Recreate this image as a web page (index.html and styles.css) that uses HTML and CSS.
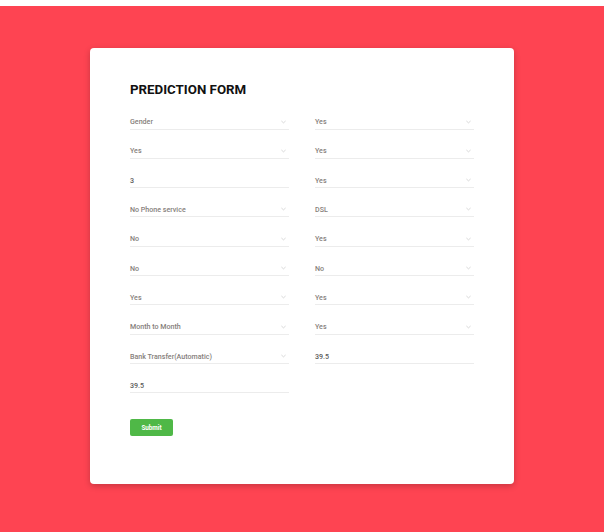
FILE: index.html
```html
<!DOCTYPE html>
<html lang="en">
<head>
<meta charset="utf-8">
<title>Prediction Form</title>
<link rel="stylesheet" href="styles.css">
</head>
<body>
<div class="page">
  <div class="card">
    <h1 class="title">PREDICTION FORM</h1>
    <form class="grid">
      <div class="field select"><span>Gender</span><svg class="chev" viewBox="0 0 6 4"><polyline points="0.5,0.8 3,3 5.5,0.8"/></svg></div>
      <div class="field select"><span>Yes</span><svg class="chev" viewBox="0 0 6 4"><polyline points="0.5,0.8 3,3 5.5,0.8"/></svg></div>
      <div class="field select"><span>Yes</span><svg class="chev" viewBox="0 0 6 4"><polyline points="0.5,0.8 3,3 5.5,0.8"/></svg></div>
      <div class="field select"><span>Yes</span><svg class="chev" viewBox="0 0 6 4"><polyline points="0.5,0.8 3,3 5.5,0.8"/></svg></div>
      <div class="field input"><span>3</span></div>
      <div class="field select"><span>Yes</span><svg class="chev" viewBox="0 0 6 4"><polyline points="0.5,0.8 3,3 5.5,0.8"/></svg></div>
      <div class="field select"><span>No Phone service</span><svg class="chev" viewBox="0 0 6 4"><polyline points="0.5,0.8 3,3 5.5,0.8"/></svg></div>
      <div class="field select"><span>DSL</span><svg class="chev" viewBox="0 0 6 4"><polyline points="0.5,0.8 3,3 5.5,0.8"/></svg></div>
      <div class="field select"><span>No</span><svg class="chev" viewBox="0 0 6 4"><polyline points="0.5,0.8 3,3 5.5,0.8"/></svg></div>
      <div class="field select"><span>Yes</span><svg class="chev" viewBox="0 0 6 4"><polyline points="0.5,0.8 3,3 5.5,0.8"/></svg></div>
      <div class="field select"><span>No</span><svg class="chev" viewBox="0 0 6 4"><polyline points="0.5,0.8 3,3 5.5,0.8"/></svg></div>
      <div class="field select"><span>No</span><svg class="chev" viewBox="0 0 6 4"><polyline points="0.5,0.8 3,3 5.5,0.8"/></svg></div>
      <div class="field select"><span>Yes</span><svg class="chev" viewBox="0 0 6 4"><polyline points="0.5,0.8 3,3 5.5,0.8"/></svg></div>
      <div class="field select"><span>Yes</span><svg class="chev" viewBox="0 0 6 4"><polyline points="0.5,0.8 3,3 5.5,0.8"/></svg></div>
      <div class="field select"><span>Month to Month</span><svg class="chev" viewBox="0 0 6 4"><polyline points="0.5,0.8 3,3 5.5,0.8"/></svg></div>
      <div class="field select"><span>Yes</span><svg class="chev" viewBox="0 0 6 4"><polyline points="0.5,0.8 3,3 5.5,0.8"/></svg></div>
      <div class="field select"><span>Bank Transfer(Automatic)</span><svg class="chev" viewBox="0 0 6 4"><polyline points="0.5,0.8 3,3 5.5,0.8"/></svg></div>
      <div class="field input"><span>39.5</span></div>
      <div class="field input"><span>39.5</span></div>
    </form>
    <button class="submit" type="button">Submit</button>
  </div>
</div>
</body>
</html>
```
FILE: styles.css
```css
* { box-sizing: border-box; }
html, body { margin: 0; padding: 0; background: #fff; }
body { font-family: Roboto, "Liberation Sans", sans-serif; }

.page {
  margin-top: 6px;
  width: 604px;
  min-height: 526px;
  background: #fe4452;
  padding: 42px 0 0 90px;
}

.card {
  width: 424px;
  background: #fff;
  border-radius: 4px;
  box-shadow: 0 2px 6px rgba(0, 0, 0, 0.22);
  padding: 34px 40px 48px 40px;
}

.title {
  margin: 0 0 15.5px 0;
  font-size: 13.3px;
  line-height: 16px;
  font-weight: 700;
  color: #111;
  letter-spacing: 0;
}

.grid {
  display: grid;
  grid-template-columns: 159px 159px;
  column-gap: 26px;
  row-gap: 13.33px;
  margin: 0 0 25.7px 0;
}

.field {
  display: flex;
  align-items: center;
  justify-content: space-between;
  height: 16px;
  border-bottom: 1px solid #ececec;
  font-size: 7.1px;
  font-weight: 500;
  line-height: 15px;
  padding: 1px 3px 0 0;
}

.field.select { color: #86807b; }
.field.input { color: #5a5a5a; }

.chev {
  width: 5px;
  height: 4px;
  fill: none;
  stroke: #c4c4c4;
  stroke-width: 0.8;
}

.submit {
  display: block;
  width: 43px;
  height: 17px;
  border: 0;
  border-radius: 2px;
  background: #4fb847;
  color: #fff;
  font-family: Roboto, "Liberation Sans", sans-serif;
  font-size: 6.3px;
  font-weight: 700;
  padding: 0;
}
```
